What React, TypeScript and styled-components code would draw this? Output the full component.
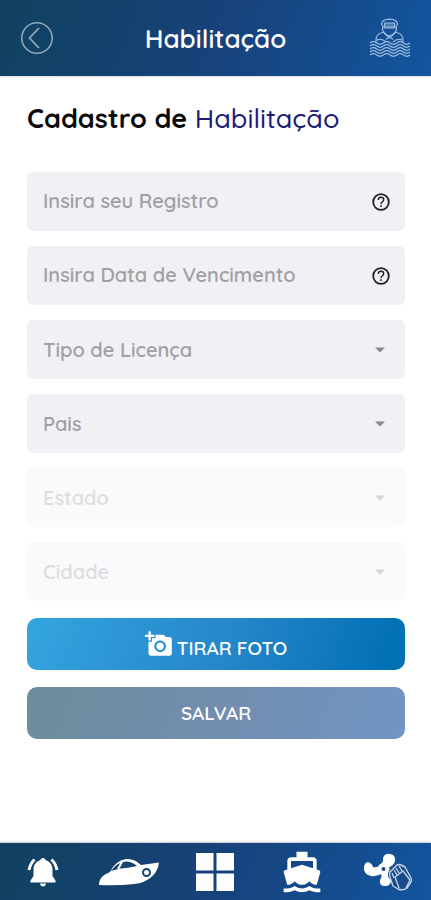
import React from "react";
import styled, { createGlobalStyle } from "styled-components";
import { MdAddAPhoto, MdDirectionsBoat } from "react-icons/md";

const GlobalStyle = createGlobalStyle`
  * { box-sizing: border-box; }
  body {
    margin: 0;
    background: #ffffff;
    font-family: Quicksand, Lato, sans-serif;
  }
  button, input, select { font-family: inherit; }
`;

const bar = "linear-gradient(110deg, #10415f 0%, #17427a 50%, #12559f 100%)";

const Screen = styled.div`
  min-height: 100vh;
  display: flex;
  flex-direction: column;
`;

const Header = styled.header`
  height: 76px;
  flex: none;
  padding: 0 20px;
  display: grid;
  grid-template-columns: 42px 1fr 42px;
  align-items: center;
  background: ${bar};
  box-shadow: 0 1px 2px #d8d8e2;
`;

const Title = styled.h1`
  margin: 0;
  padding-top: 2px;
  text-align: center;
  color: #ffffff;
  font-size: 26px;
  line-height: 32px;
  font-weight: 600;
`;

const IconButton = styled.button`
  padding: 0;
  border: 0;
  background: none;
  display: flex;
  cursor: pointer;
`;

const Main = styled.main`
  flex: 1;
  padding: 24px 26px 24px 27px;
`;

const Heading = styled.h2`
  margin: 0 0 36px;
  color: #0b0b0d;
  font-size: 27px;
  line-height: 36px;
  font-weight: 700;
  white-space: nowrap;
`;

const Accent = styled.span`
  color: #1c1c78;
  font-weight: 500;
`;

const Form = styled.form`
  display: grid;
  gap: 17px;
`;

const Fields = styled.div`
  display: grid;
  grid-auto-rows: 59px;
  gap: 15px;
`;

const Field = styled.div<{ $faded?: boolean }>`
  display: grid;
  grid-template-columns: 1fr 50px;
  grid-template-rows: 59px;
  align-items: center;
  border-radius: 6px;
  background: #f1f0f5;
  opacity: ${(p) => (p.$faded ? 0.35 : 1)};

  > svg {
    grid-area: 1 / 2;
    justify-self: center;
    pointer-events: none;
  }
`;

const TextInput = styled.input`
  grid-area: 1 / 1 / 2 / 3;
  width: 100%;
  height: 100%;
  padding: 0 48px 2px 16px;
  border: 0;
  border-radius: 6px;
  background: transparent;
  color: #333338;
  font-size: 20px;
  font-weight: 600;

  &::placeholder {
    color: #a09fa4;
    opacity: 1;
  }
`;

const Select = styled.select`
  grid-area: 1 / 1 / 2 / 3;
  width: 100%;
  height: 100%;
  padding: 0 48px 0 16px;
  border: 0;
  border-radius: 6px;
  appearance: none;
  background: transparent;
  color: #a09fa4;
  font-size: 20px;
  font-weight: 600;
  opacity: 1;
`;

const Button = styled.button<{ $muted?: boolean }>`
  height: 52px;
  padding: 0;
  display: flex;
  align-items: center;
  justify-content: center;
  gap: 4px;
  border: 0;
  border-radius: 10px;
  color: #ffffff;
  font-size: 19px;
  font-weight: 600;
  cursor: pointer;
  background: ${(p) =>
    p.$muted
      ? "linear-gradient(110deg, #6e8c9b 0%, #738dae 50%, #7095c4 100%)"
      : "linear-gradient(110deg, #34a5df 0%, #2585c9 55%, #0270b5 95%)"};
`;

const ButtonText = styled.span`
  padding-top: 8px;
`;

const Nav = styled.nav`
  height: 57px;
  flex: none;
  display: grid;
  grid-template-columns: repeat(5, 1fr);
  background: ${bar};
  box-shadow: 0 -1px 2px #c4c4d0;
`;

const NavLink = styled.a`
  display: flex;
  align-items: center;
  justify-content: center;
  color: #ffffff;
`;

const BackIcon = () => (
  <svg width="34" height="34" viewBox="0 0 34 34" fill="none" stroke="#91a9bb">
    <circle cx="17" cy="17" r="15.2" strokeWidth="1.6" />
    <path d="M19 7 L9.5 17 L19 27" strokeWidth="1.8" />
  </svg>
);

const HelpIcon = () => (
  <svg width="20" height="20" viewBox="0 0 20 20" fill="none" stroke="#202024">
    <circle cx="11" cy="10" r="7.8" strokeWidth="1.8" />
    <path d="M8.300 8 Q8.300 5.300 11 5.300 Q13.700 5.300 13.700 7.800 Q13.700 9 12.200 10 Q11 10.800 11 12.200" strokeWidth="1.400" />
    <path d="M11 13.300 V15" strokeWidth="1.500" />
  </svg>
);

const wave = (y: number) =>
  `M1 ${y} q3.4 -2.6 6.700 0 t6.700 0 t6.700 0 t6.700 0 t6.700 0 t6.500 0`;

const SailorIcon = () => (
  <svg width="42" height="40" viewBox="0 0 42 40" fill="none" stroke="#9bbbe0" strokeWidth="1.2">
    <path d="M12.500 6 Q13 1.500 20.500 1.200 Q28 1.500 28.500 6 L27 9 H14 Z" />
    <path d="M14 9 Q12.500 12 15 14 Q16.500 17.500 20.500 17.500 Q24.500 17.500 26 14 Q28.500 12 27 9" />
    <path d="M15.500 5 H25.500 V10 H15.500 Z" fill="#7fa5d2" fillOpacity="0.5" />
    <path d="M15 15 L20.500 20 L26 15 M17 21.500 L20.500 18.500 L24 21.500" />
    <path d="M7 24 Q6 16 13.500 14.500 H15 M34 24 Q35 16 27.500 14.500 H26" />
    <path d="M7.500 22 Q13 20 17 24 M33.500 22 Q28 20 24 24" />
    <path d={wave(25)} />
    <path d={wave(28)} />
    <path d={wave(31)} />
    <path d={wave(34)} />
    <path d={wave(37)} />
  </svg>
);

const Caret = () => (
  <svg width="11" height="6" viewBox="0 0 11 6">
    <path d="M0 0.500 H10 L5 5.500 Z" fill="#88888c" />
  </svg>
);

const BellIcon = () => (
  <svg width="32" height="32" viewBox="0 0 32 32" fill="#ffffff">
    <path d="M16 2 C17.500 2 18.500 3 18.600 4.200 C23 5.500 25.500 9 25.500 13 V20 L28.500 24.500 V26.500 H3.500 V24.500 L6.500 20 V13 C6.500 9 9 5.500 13.400 4.200 C13.500 3 14.500 2 16 2 Z" />
    <path d="M13 27.500 H19 Q18.500 30.500 16 30.500 Q13.500 30.500 13 27.500 Z" />
    <path d="M7.500 3.500 Q3.300 7.500 2 14 M24.500 3.500 Q28.700 7.500 30 14" fill="none" stroke="#ffffff" strokeWidth="3" />
  </svg>
);

const YachtIcon = () => (
  <svg width="62" height="30" viewBox="0 0 62 30">
    <path d="M1 28 Q1 21 7 17.500 L12 15 Q17 4 28 2 Q36 1 43 8 L61 5.500 Q60 14 54 19.500 Q47 26 36 27 Q19 29 1 28 Z" fill="#ffffff" />
    <path d="M13 14 Q19 5 28 4.500 Q34 4.500 39 9 Q29 11 22 11.500 Z" fill="#15446f" />
    <path d="M20 12 L24 5" stroke="#ffffff" strokeWidth="2" />
    <circle cx="48.500" cy="15.500" r="3.500" fill="#ffffff" stroke="#15446f" strokeWidth="2" />
  </svg>
);

const GridIcon = () => (
  <svg width="38" height="40" viewBox="0 0 38 40" fill="#ffffff">
    <path d="M0 1 H17.500 V18.500 H0 Z M20.500 1 H38 V18.500 H20.500 Z M0 21.500 H17.500 V39 H0 Z M20.500 21.500 H38 V39 H20.500 Z" />
  </svg>
);

const PropellerIcon = () => (
  <svg width="50" height="38" viewBox="0 0 50 38">
    <g fill="#ffffff">
      <circle cx="20.500" cy="16" r="6" />
      <path d="M16 14 Q21 9 20 5 Q22 0 27 1 Q33 2 32 8 Q31 13 24 15 Z" />
      <path d="M20 20 Q14 24 8 23 Q0 21 1 14 Q2 8 6.500 9.500 Q9.500 11 10 14 Q14 15 18 12 Z" />
      <path d="M17 18 L25 18 Q24 25 28 27 Q28 33 22 33 Q16 33 17 27 Q20 24 17 18 Z" />
    </g>
    <circle cx="20.500" cy="16" r="2" fill="#174b8b" />
    <g fill="#174b8b" stroke="#c3d2e5" strokeWidth="1.400" strokeLinejoin="round">
      <path d="M27 19 L34 12 Q36 11 38 12 L42 14 L48 25 Q49 27 48 29 L44 35 Q40 38 35 36 L30 33 L27 24 Q26 21 27 19 Z" />
      <path d="M32 24 L40 18 L47 27 L43 35 M32 24 L36 35 M29 20 L31 25 M31 17 L34 22 M33 15 L36 20 M36 13 L39 18" fill="none" />
    </g>
  </svg>
);

const selects = [
  { label: "Tipo de Licença", disabled: false },
  { label: "Pais", disabled: false },
  { label: "Estado", disabled: true },
  { label: "Cidade", disabled: true },
];

export default function App() {
  return (
    <Screen>
      <GlobalStyle />
      <Header>
        <IconButton type="button" aria-label="Voltar">
          <BackIcon />
        </IconButton>
        <Title>Habilitação</Title>
        <SailorIcon />
      </Header>
      <Main>
        <Heading>
          Cadastro de <Accent>Habilitação</Accent>
        </Heading>
        <Form onSubmit={(e) => e.preventDefault()}>
          <Fields>
            {["Insira seu Registro", "Insira Data de Vencimento"].map((text) => (
              <Field key={text}>
                <TextInput type="text" placeholder={text} aria-label={text} />
                <HelpIcon />
              </Field>
            ))}
            {selects.map(({ label, disabled }) => (
              <Field key={label} $faded={disabled}>
                <Select aria-label={label} disabled={disabled} defaultValue="">
                  <option value="">{label}</option>
                </Select>
                <Caret />
              </Field>
            ))}
          </Fields>
          <Button type="button">
            <MdAddAPhoto size={28} />
            <ButtonText>TIRAR FOTO</ButtonText>
          </Button>
          <Button type="submit" $muted>
            SALVAR
          </Button>
        </Form>
      </Main>
      <Nav aria-label="Principal">
        <NavLink href="#alertas" aria-label="Alertas">
          <BellIcon />
        </NavLink>
        <NavLink href="#embarcacoes" aria-label="Embarcações">
          <YachtIcon />
        </NavLink>
        <NavLink href="#inicio" aria-label="Início">
          <GridIcon />
        </NavLink>
        <NavLink href="#navegacao" aria-label="Navegação">
          <MdDirectionsBoat size={44} />
        </NavLink>
        <NavLink href="#servicos" aria-label="Serviços">
          <PropellerIcon />
        </NavLink>
      </Nav>
    </Screen>
  );
}
